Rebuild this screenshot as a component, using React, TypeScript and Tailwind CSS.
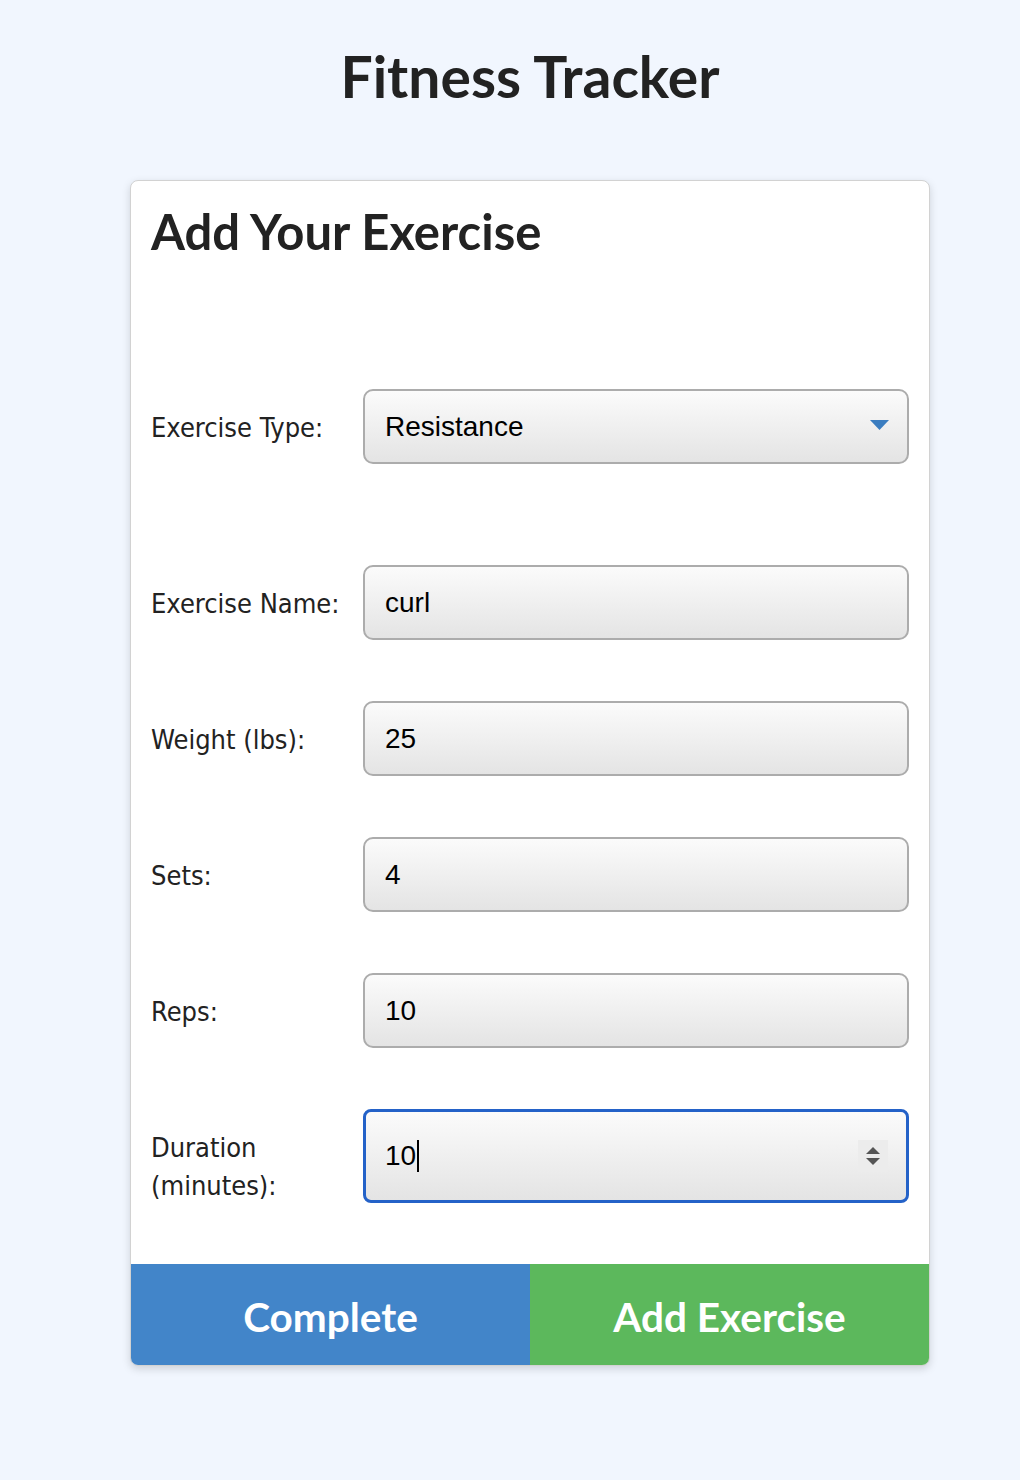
import React from "react";

const fieldBase =
  "w-full h-[75px] rounded-[10px] border-2 border-[#acacac] bg-linear-to-b from-[#fbfbfb] to-[#e4e4e4] pl-[20px] pr-5 text-[28px] text-black font-['Liberation_Sans',Arial,sans-serif] outline-none";

function Row({
  label,
  children,
  className = "",
  labelClass = "",
}: {
  label: React.ReactNode;
  children: React.ReactNode;
  className?: string;
  labelClass?: string;
}) {
  return (
    <div className={"flex items-center " + className}>
      <label
        className={
          "w-[212px] shrink-0 pr-3 text-[27px] leading-[38px] text-[#222] font-['DejaVu_Sans_Condensed','DejaVu_Sans',sans-serif] " +
          labelClass
        }
      >
        {label}
      </label>
      <div className="flex-1">{children}</div>
    </div>
  );
}

const App = () => {
  return (
    <div className="min-h-screen bg-[#f1f6fe] pl-[40px] pt-[42px] pb-[100px] font-['Lato',sans-serif]">
      <h1 className="text-center text-[57px] font-bold leading-[1.2] text-[#222]">Fitness Tracker</h1>

      <div className="mx-auto mt-[70px] w-[800px] overflow-hidden rounded-lg border border-[#d2d2d2] bg-white shadow-[0_3px_8px_rgba(0,0,0,0.15)]">
        <div className="px-5 pt-[21px]">
          <h2 className="text-[49px] font-bold leading-[1.2] text-[#222]">Add Your Exercise</h2>

          <Row label="Exercise Type:" className="mt-[128px]" labelClass="pt-[3px]">
            <div className="relative">
              <select defaultValue="resistance" className={fieldBase + " appearance-none"}>
                <option value="resistance">Resistance</option>
                <option value="cardio">Cardio</option>
              </select>
              <svg className="pointer-events-none absolute right-[20px] top-[31px]" width="19" height="10" viewBox="0 0 19 10">
                <path d="M0 0 H19 L9.5 10 Z" fill="#3b7dc0" />
              </svg>
            </div>
          </Row>

          <Row label="Exercise Name:" className="mt-[101px]" labelClass="pt-[3px]">
            <input readOnly value="curl" className={fieldBase} />
          </Row>

          <Row label="Weight (lbs):" className="mt-[61px]" labelClass="pt-[3px]">
            <input readOnly value="25" className={fieldBase} />
          </Row>

          <Row label="Sets:" className="mt-[61px]" labelClass="pt-[3px]">
            <input readOnly value="4" className={fieldBase} />
          </Row>

          <Row label="Reps:" className="mt-[61px]" labelClass="pt-[3px]">
            <input readOnly value="10" className={fieldBase} />
          </Row>

          <Row label={<>Duration<br />(minutes):</>} className="mt-[61px]" labelClass="translate-y-[11px]">
            <div className="flex h-[94px] items-center rounded-[8px] border-[3px] border-[#2462c8] bg-linear-to-b from-[#fbfbfb] to-[#e4e4e4] pl-[19px] pr-[18px] text-[28px] text-black font-['Liberation_Sans',Arial,sans-serif]">
              <span>10</span>
              <span className="ml-[1px] h-[32px] w-[2px] bg-black" />
              <div className="ml-auto flex h-[32px] w-[30px] flex-col items-center justify-center gap-[4px] bg-[#ececec]">
                <svg width="14" height="7" viewBox="0 0 14 7">
                  <path d="M7 0 L14 7 H0 Z" fill="#555" />
                </svg>
                <svg width="14" height="7" viewBox="0 0 14 7">
                  <path d="M0 0 H14 L7 7 Z" fill="#555" />
                </svg>
              </div>
            </div>
          </Row>
        </div>

        <div className="mt-[61px] flex h-[101px]">
          <button className="flex-1 bg-[#4285c9] pt-[5px] text-[40.5px] font-bold text-white">Complete</button>
          <button className="flex-1 bg-[#5cb85c] pt-[5px] text-[40.5px] font-bold text-white">Add Exercise</button>
        </div>
      </div>
    </div>
  );
};

export default App;
